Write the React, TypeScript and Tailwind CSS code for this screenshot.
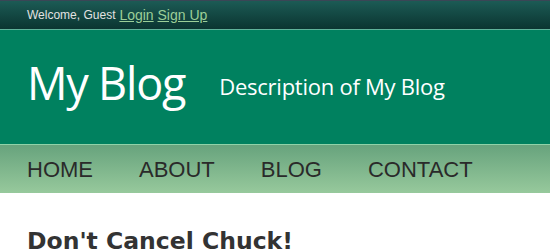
export default function App() {
  return (
    <div className="w-[550px] h-[250px] overflow-hidden bg-white">
      <div className="h-[30px] border-t border-b border-t-[#3a4656] border-b-[#5fb39a] bg-gradient-to-b from-[#1c5b55] to-[#0b3531] flex items-center pl-[27px] font-['Liberation_Sans',Arial,sans-serif]">
        <span className="text-[12px] text-[#e2e2e2]">Welcome, Guest</span>
        <span className="text-[14px]">&nbsp;</span>
        <a href="#" className="text-[14px] text-[#9ccf98] underline">Login</a>
        <span className="text-[14px]">&nbsp;</span>
        <a href="#" className="text-[14px] text-[#9ccf98] underline">Sign Up</a>
      </div>
      <div className="h-[114px] bg-[#00815f] flex items-start pl-[27px] font-['Open_Sans',sans-serif] text-white">
        <h1 className="text-[45px] leading-[45px] tracking-[-1.2px] mt-[30px]">My Blog</h1>
        <p className="text-[22px] leading-[22px] tracking-[-0.25px] mt-[45px] ml-[34px]">Description of My Blog</p>
      </div>
      <div className="h-[49px] border-t border-t-[#8fd3a8] bg-gradient-to-b from-[#67a37d] to-[#97c99c] flex items-center pl-[27px] gap-[46px] font-['Liberation_Sans',Arial,sans-serif] text-[22px] text-[#2a2a2a]">
        <span>HOME</span>
        <span>ABOUT</span>
        <span>BLOG</span>
        <span>CONTACT</span>
      </div>
      <h2 className="mt-[37px] pl-[27px] font-['DejaVu_Sans',Verdana,sans-serif] font-bold text-[23.5px] leading-[23px] text-[#333333]">Don't Cancel Chuck!</h2>
    </div>
  );
}
